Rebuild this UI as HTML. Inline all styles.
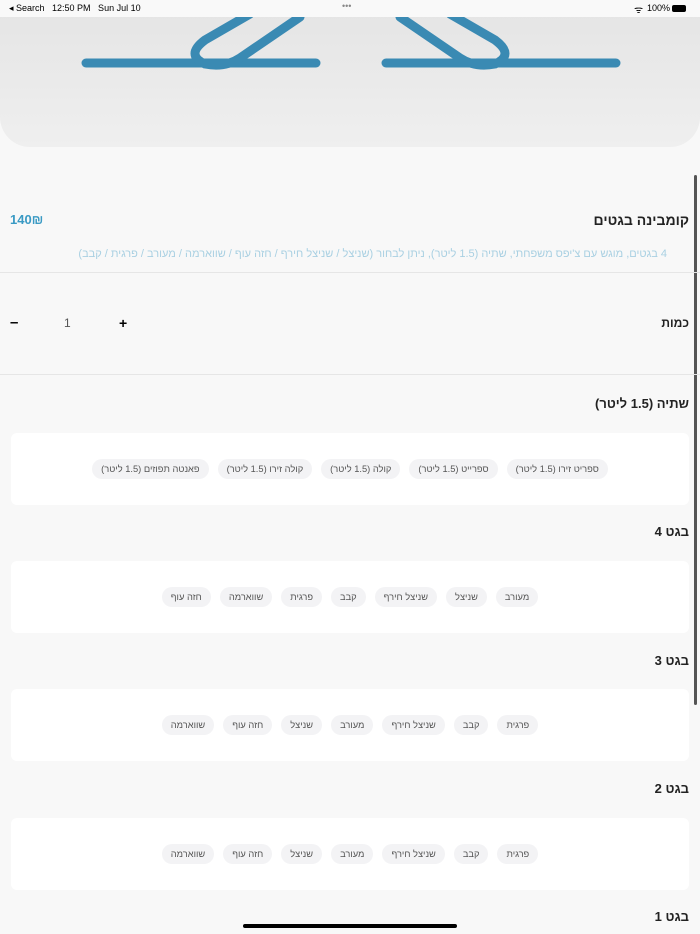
<html><head><style>
body{margin:0;width:700px;height:934px;overflow:hidden;background:#f8f8f8;font-family:"Liberation Sans","Noto Sans CJK SC",sans-serif;position:relative}
.a{position:absolute}
.r{direction:rtl}
.card{position:absolute;left:11px;width:678px;height:72px;background:#fff;border-radius:6px;display:flex;flex-direction:row-reverse;justify-content:center;align-items:center;gap:9px;direction:ltr}
.chip{background:#f3f3f5;border-radius:10px;height:20px;line-height:20px;padding:0 9px;font-size:9.3px;color:#555;direction:rtl;white-space:nowrap}
.t{position:absolute;right:11px;font-weight:bold;font-size:13px;color:#222;direction:rtl}
</style></head><body>
<div class="a" style="left:0;top:0;width:700px;height:147px;background:linear-gradient(#e4e4e4,#efefef);border-radius:0 0 30px 30px"></div>
<svg class="a" style="left:0;top:0" width="700" height="80">
<g stroke="#3a8ab3" stroke-width="9" fill="none" stroke-linecap="round">
<line x1="86" y1="63" x2="316" y2="63"/><line x1="386" y1="63" x2="616" y2="63"/>
<path d="M250 14 L205 40 Q185 55 205 64 Q225 68 240 58 L300 17"/>
<path d="M450 14 L495 40 Q515 55 495 64 Q475 68 460 58 L400 17"/>
</g></svg>
<div class="a" style="left:0;top:0;width:700px;height:17px;background:#f9f9f9;font-size:9px;color:#000">
<span class="a" style="left:9px;top:3px">◂ Search&nbsp;&nbsp; 12:50 PM&nbsp;&nbsp; Sun Jul 10</span>
<span class="a" style="left:342px;top:1px;color:#888">•••</span>
<span class="a" style="left:634px;top:2px;font-size:10px">ᯤ</span>
<span class="a" style="left:647px;top:3px">100%</span>
<span class="a" style="left:672px;top:5px;width:14px;height:7px;background:#000;border-radius:2px"></span>
</div>
<div class="a" style="left:694px;top:175px;width:3px;height:530px;background:#555;border-radius:2px"></div>
<div class="t" style="top:212px;font-size:14px">קומבינה בגטים</div>
<div class="a" style="left:10px;top:212px;font-size:13px;font-weight:bold;color:#3a9ac4">140₪</div>
<div class="a r" style="right:33px;top:248px;font-size:11px;color:#a9d0e2">4 בגטים, מוגש עם צ'יפס משפחתי, שתיה (1.5 ליטר), ניתן לבחור (שניצל / שניצל חירף / חזה עוף / שווארמה / מעורב / פרגית / קבב)</div>
<div class="a" style="left:0;top:272px;width:700px;height:1px;background:#e6e6e6"></div>
<div class="t" style="top:316px;font-size:12px">כמות</div>
<div class="a" style="left:10px;top:314px;font-size:15px;font-weight:bold">–</div>
<div class="a" style="left:64px;top:316px;font-size:12px;color:#555">1</div>
<div class="a" style="left:119px;top:315px;font-size:14px;font-weight:bold">+</div>
<div class="a" style="left:0;top:374px;width:700px;height:1px;background:#e6e6e6"></div>
<div class="t" style="top:396px">שתיה (1.5 ליטר)</div>
<div class="card" style="top:433px"><span class="chip">ספריט זירו (1.5 ליטר)</span><span class="chip">ספרייט (1.5 ליטר)</span><span class="chip">קולה (1.5 ליטר)</span><span class="chip">קולה זירו (1.5 ליטר)</span><span class="chip">פאנטה תפוזים (1.5 ליטר)</span></div>
<div class="t" style="top:524px">בגט 4</div>
<div class="card" style="top:561px"><span class="chip">מעורב</span><span class="chip">שניצל</span><span class="chip">שניצל חירף</span><span class="chip">קבב</span><span class="chip">פרגית</span><span class="chip">שווארמה</span><span class="chip">חזה עוף</span></div>
<div class="t" style="top:653px">בגט 3</div>
<div class="card" style="top:689px"><span class="chip">פרגית</span><span class="chip">קבב</span><span class="chip">שניצל חירף</span><span class="chip">מעורב</span><span class="chip">שניצל</span><span class="chip">חזה עוף</span><span class="chip">שווארמה</span></div>
<div class="t" style="top:781px">בגט 2</div>
<div class="card" style="top:818px"><span class="chip">פרגית</span><span class="chip">קבב</span><span class="chip">שניצל חירף</span><span class="chip">מעורב</span><span class="chip">שניצל</span><span class="chip">חזה עוף</span><span class="chip">שווארמה</span></div>
<div class="t" style="top:909px">בגט 1</div>
<div class="a" style="left:243px;top:924px;width:214px;height:4px;background:#000;border-radius:2px"></div>
</body></html>
